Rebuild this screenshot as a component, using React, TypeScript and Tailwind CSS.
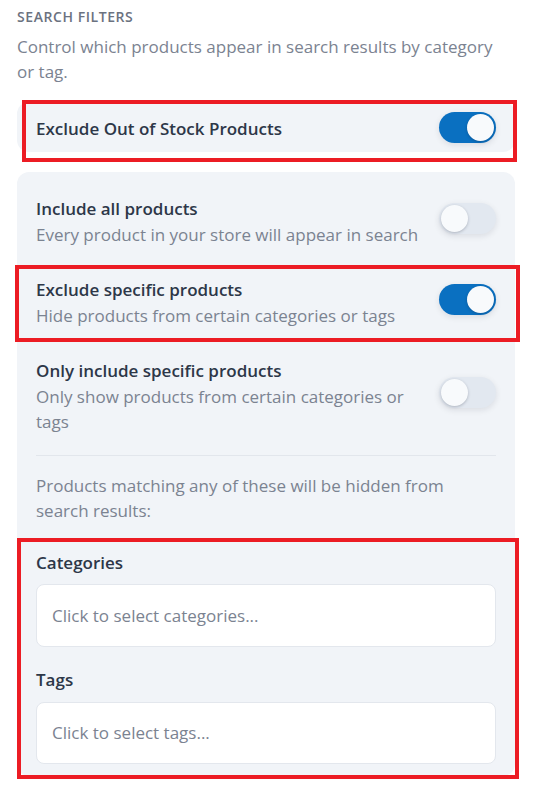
import React from "react";

function Toggle({ on, className = "" }: { on: boolean; className?: string }) {
  return (
    <div
      className={
        "relative w-[57px] h-[31px] rounded-full shrink-0 shadow-[0_2px_6px_rgba(15,23,42,0.10)] " +
        (on ? "bg-[#0a70c1] " : "bg-[#e2e8f0] ") +
        className
      }
    >
      <div
        className={
          "absolute top-[2px] w-[27px] h-[27px] rounded-full bg-[#f8fafc] shadow-[0_1px_3px_rgba(15,23,42,0.25)] " +
          (on ? "left-[28px]" : "left-[2px]")
        }
      />
    </div>
  );
}

function Row({ title, desc, on, descWidth = "" }: { title: string; desc: string; on: boolean; descWidth?: string }) {
  return (
    <div className="flex items-center justify-between gap-4">
      <div className={"flex flex-col " + descWidth}>
        <div className="text-[17px] leading-[25.5px] font-semibold text-[#2d3748]">{title}</div>
        <div className="text-[17px] leading-[25.5px] text-[#7b8391]">{desc}</div>
      </div>
      <Toggle on={on} className="mb-[7px]" />
    </div>
  );
}

export default function App() {
  return (
    <div className="relative w-[533px] h-[793px] bg-white pl-[17px] pr-[18px] pt-[8px] font-['Open_Sans',sans-serif]">
      <div className="text-[14px] leading-[18px] font-semibold tracking-[0.04em] text-[#6b7280]">SEARCH FILTERS</div>
      <div className="mt-[8px] w-[485px] text-[17px] leading-[25px] text-[#7b8391]">
        Control which products appear in search results by category or tag.
      </div>

      <div className="mt-[18px] h-[50px] rounded-xl bg-[#f1f4f8] px-[19px] flex items-center justify-between">
        <div className="pt-[4px] text-[17px] font-semibold text-[#2d3748]">Exclude Out of Stock Products</div>
        <Toggle on={true} />
      </div>

      <div className="mt-[20px] rounded-xl bg-[#f1f4f8] px-[19px] pt-[24px] pb-[12px]">
        <Row title="Include all products" desc="Every product in your store will appear in search" on={false} />
        <div className="mt-[30px]">
          <Row title="Exclude specific products" desc="Hide products from certain categories or tags" on={true} />
        </div>
        <div className="mt-[30px]">
          <Row
            title="Only include specific products"
            desc="Only show products from certain categories or tags"
            on={false}
            descWidth="w-[385px]"
          />
        </div>
        <div className="mt-[20px] border-t border-[#e2e6ec]" />
        <div className="mt-[17px] text-[17px] leading-[25.5px] text-[#7b8391] pr-[30px]">
          Products matching any of these will be hidden from search results:
        </div>
        <div className="mt-[26px] text-[17px] leading-[25.5px] font-semibold text-[#2d3748]">Categories</div>
        <div className="mt-[9px] h-[63px] rounded-lg bg-white border-[1.5px] border-[#e3e7ed] flex items-center px-[15px] text-[17px] text-[#7b8391]">
          Click to select categories...
        </div>
        <div className="mt-[20px] text-[17px] leading-[25.5px] font-semibold text-[#2d3748]">Tags</div>
        <div className="mt-[9px] h-[62px] rounded-lg bg-white border-[1.5px] border-[#e3e7ed] flex items-center px-[15px] text-[17px] text-[#7b8391]">
          Click to select tags...
        </div>
      </div>

      <div className="absolute left-[22px] top-[100px] w-[495px] h-[62px] border-[4px] border-[#ec1c24] pointer-events-none" />
      <div className="absolute left-[15px] top-[265px] w-[505px] h-[77px] border-[4px] border-[#ec1c24] pointer-events-none" />
      <div className="absolute left-[17px] top-[538px] w-[502px] h-[241px] border-[4px] border-[#ec1c24] pointer-events-none" />
    </div>
  );
}
